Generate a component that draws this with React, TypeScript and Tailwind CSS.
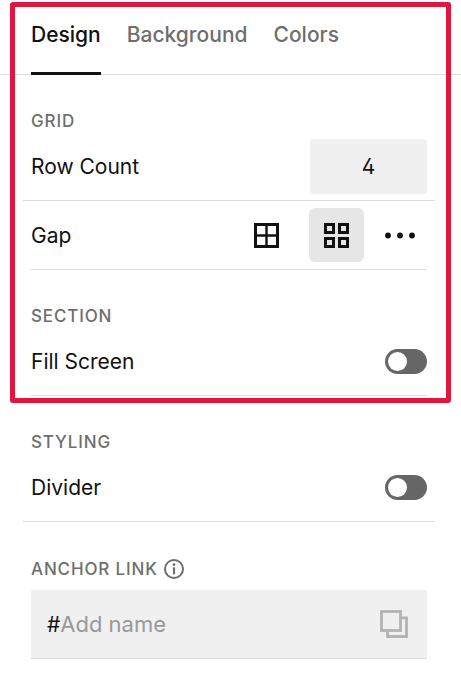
import { useState, type ReactNode } from "react";

function SectionLabel({ children }: { children: ReactNode }) {
  return (
    <h2 className="flex items-center gap-1.5 text-[17px] leading-6 font-medium tracking-wider text-[#6e6e6e] uppercase">
      {children}
    </h2>
  );
}

function Row({ wide = false, children }: { wide?: boolean; children: ReactNode }) {
  const inset = wide ? "-mx-2 px-2" : "";
  return (
    <div className={`flex items-center justify-between border-b border-[#dedede] ${inset}`}>
      {children}
    </div>
  );
}

function ToggleRow({ id, label, wide }: { id: string; label: string; wide?: boolean }) {
  const [on, setOn] = useState(false);
  return (
    <Row wide={wide}>
      <label htmlFor={id} className="py-[19px]">
        {label}
      </label>
      <input
        id={id}
        type="checkbox"
        role="switch"
        checked={on}
        onChange={(e) => setOn(e.target.checked)}
        className="flex h-[25px] w-[42px] cursor-pointer appearance-none items-center rounded-full bg-[#666] px-[3px] before:block before:size-[19px] before:rounded-full before:bg-white checked:justify-end checked:bg-black"
      />
    </Row>
  );
}

function JoinedGridIcon() {
  return (
    <svg width="25" height="25" viewBox="0 0 25 25" fill="none" stroke="currentColor" aria-hidden="true">
      <rect x="1.5" y="1.5" width="22" height="22" strokeWidth="3" />
      <path d="M12.5 1v23M1 12.5h23" strokeWidth="2.4" />
    </svg>
  );
}

function SpacedGridIcon() {
  return (
    <svg width="25" height="25" viewBox="0 0 25 25" fill="none" stroke="currentColor" strokeWidth="3" aria-hidden="true">
      <rect x="1.5" y="1.5" width="8" height="8" />
      <rect x="15.5" y="1.5" width="8" height="8" />
      <rect x="1.5" y="15.5" width="8" height="8" />
      <rect x="15.5" y="15.5" width="8" height="8" />
    </svg>
  );
}

function DotsIcon() {
  return (
    <svg width="32" height="7" viewBox="0 0 32 7" fill="currentColor" aria-hidden="true">
      <circle cx="4" cy="3.5" r="2.9" />
      <circle cx="16" cy="3.5" r="2.9" />
      <circle cx="28" cy="3.5" r="2.9" />
    </svg>
  );
}

function InfoIcon() {
  return (
    <svg width="20" height="20" viewBox="0 0 20 20" fill="none" stroke="currentColor" aria-hidden="true">
      <circle cx="10" cy="10" r="9" strokeWidth="2" />
      <path d="M10 8.3v7" strokeWidth="2.2" />
      <circle cx="10" cy="5.7" r="1.4" fill="currentColor" stroke="none" />
    </svg>
  );
}

function CopyIcon() {
  return (
    <svg width="28" height="28" viewBox="0 0 28 28" fill="none" stroke="currentColor" strokeWidth="2.8" aria-hidden="true">
      <rect x="1.5" y="1.5" width="19" height="19" />
      <path d="M21 7.8h5.5v18.7h-19V21" />
    </svg>
  );
}

const tabs = ["Design", "Background", "Colors"];

const gaps = [
  { name: "No gap", icon: <JoinedGridIcon />, width: "w-[55px]" },
  { name: "Default gap", icon: <SpacedGridIcon />, width: "w-[55px]" },
  { name: "More gap options", icon: <DotsIcon />, width: "w-[42px]" },
];

export default function App() {
  const [tab, setTab] = useState("Design");
  const [gap, setGap] = useState("Default gap");
  const [rows, setRows] = useState("4");

  return (
    <main className="relative min-h-screen bg-white font-['Inter',sans-serif] text-[21px] leading-[29px] text-[#111]">
      <div className="relative">
        <nav role="tablist" className="flex h-[75px] gap-[26px] border-b border-[#dedede] pl-[31px]">
          {tabs.map((name) => (
            <button
              key={name}
              type="button"
              role="tab"
              aria-selected={tab === name}
              onClick={() => setTab(name)}
              className={`-mb-px border-b-3 pb-1 font-medium ${
                tab === name ? "border-[#111] text-[#111]" : "border-transparent text-[#6e6e6e]"
              }`}
            >
              {name}
            </button>
          ))}
        </nav>

        <section className="pt-[34px] pr-[34px] pl-[31px]">
          <SectionLabel>Grid</SectionLabel>
          <Row wide>
            <label htmlFor="row-count" className="py-[19px]">
              Row Count
            </label>
            <input
              id="row-count"
              type="text"
              inputMode="numeric"
              value={rows}
              onChange={(e) => setRows(e.target.value)}
              className="h-[55px] w-[117px] rounded-sm bg-[#f0f0f0] text-center [font-feature-settings:'cv02']"
            />
          </Row>
          <Row>
            <span id="gap-label" className="pt-5 pb-[19px]">
              Gap
            </span>
            <div role="group" aria-labelledby="gap-label" className="mr-1.5 flex gap-[15px]">
              {gaps.map(({ name, icon, width }) => (
                <button
                  key={name}
                  type="button"
                  aria-label={name}
                  aria-pressed={gap === name}
                  onClick={() => setGap(name)}
                  className={`flex h-[54px] items-center justify-center rounded-md ${width} ${
                    gap === name ? "bg-[#e6e6e6]" : ""
                  }`}
                >
                  {icon}
                </button>
              ))}
            </div>
          </Row>
        </section>

        <section className="pt-[34px] pr-[34px] pl-[31px]">
          <SectionLabel>Section</SectionLabel>
          <ToggleRow id="fill-screen" label="Fill Screen" />
        </section>

        <div
          aria-hidden="true"
          className="pointer-events-none absolute inset-x-[10px] top-0.5 -bottom-[7px] rounded-[3px] border-[5px] border-[#e0163f]"
        />
      </div>

      <section className="pt-[34px] pr-[34px] pl-[31px]">
        <SectionLabel>Styling</SectionLabel>
        <ToggleRow id="divider" label="Divider" wide />
      </section>

      <section className="pt-[35px] pr-[34px] pl-[31px]">
        <SectionLabel>
          <label htmlFor="anchor">Anchor Link</label>
          <InfoIcon />
        </SectionLabel>
        <div className="mt-[9px] flex h-[69px] items-center border-b border-[#dcdcdc] bg-[#f0f0f0] pr-[19px] pl-4">
          <span>#</span>
          <input
            id="anchor"
            type="text"
            placeholder="Add name"
            className="min-w-0 flex-1 bg-transparent text-[22px] outline-none placeholder:text-[#999]"
          />
          <button type="button" aria-label="Copy link" className="text-[#b3b3b3]">
            <CopyIcon />
          </button>
        </div>
      </section>
    </main>
  );
}
